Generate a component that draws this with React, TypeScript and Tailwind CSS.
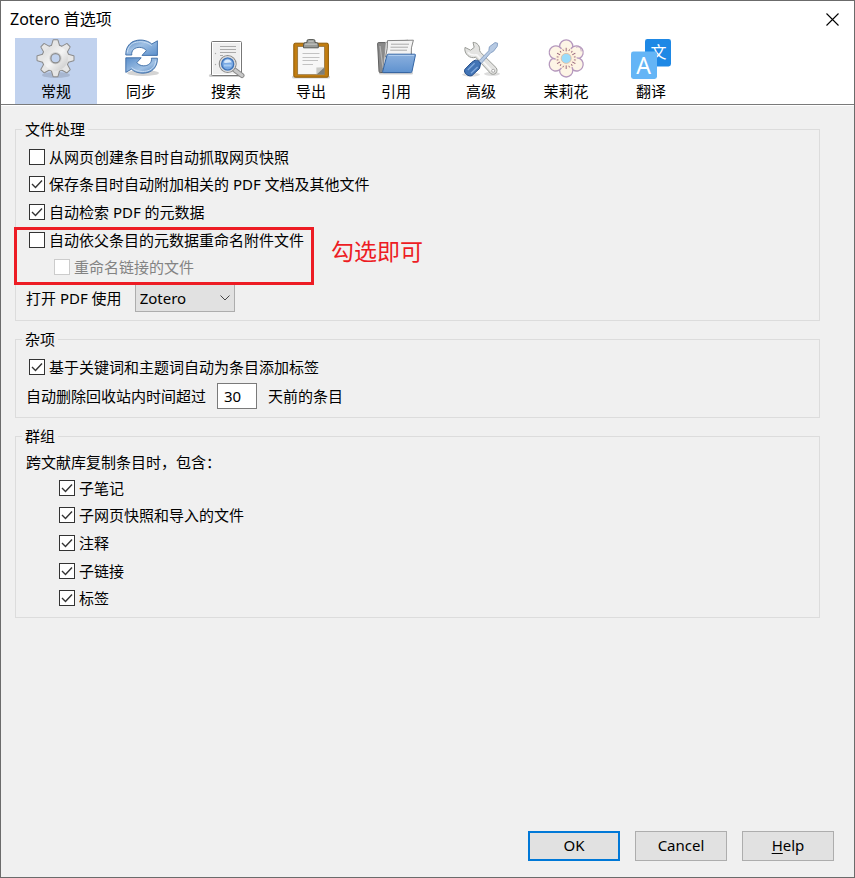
import { ReactNode, useState } from "react";
import { clsx } from "clsx";

function GearIcon() {
  const angles = [0, 45, 90, 135, 180, 225, 270, 315];
  return (
    <svg viewBox="0 0 40 40" className="size-10">
      <defs>
        <linearGradient id="gear" x1="0" y1="0" x2="1" y2="1">
          <stop offset="0" stopColor="#d8d8d8" />
          <stop offset="0.5" stopColor="#f4f4f4" />
          <stop offset="1" stopColor="#c4c4c4" />
        </linearGradient>
      </defs>
      <ellipse cx="20" cy="36" rx="14" ry="3" fill="#8f9bb3" opacity="0.5" />
      <g transform="translate(19.5 19.2)">
        <g fill="#8b8b8b" stroke="#8b8b8b" strokeWidth="2" strokeLinejoin="round">
          <circle r="13" />
          {angles.map((a) => (
            <path key={a} d="M-2 -18H2L4 -11H-4Z" transform={`rotate(${a})`} />
          ))}
        </g>
        <g fill="#e6e6e6">
          <circle r="13" />
          {angles.map((a) => (
            <path key={a} d="M-2 -18H2L4 -11H-4Z" transform={`rotate(${a})`} />
          ))}
        </g>
        <circle r="12.5" fill="url(#gear)" />
        <circle r="6.2" fill="#d2d2d2" />
        <circle r="4.6" fill="#c1d2ee" stroke="#8b8b8b" strokeWidth="1.2" />
      </g>
    </svg>
  );
}

function SyncIcon() {
  const arrow =
    "M4.8 16C4.6 9 8 4.6 12 2.6C18 -0.2 26 0.8 30.8 5L36.4 1.8V16.4H21L25.4 11.6C22 7.4 15.6 7.6 12.6 10.4C11 12 10.4 14 10.8 16Z";
  const shine =
    "M6.4 13.5C6.6 9 9.4 5.4 13 3.9C19 1.6 26 2.8 30.6 6.6";
  return (
    <svg viewBox="0 0 40 40" className="size-10">
      <defs>
        <linearGradient id="sync" x1="0" y1="0" x2="1" y2="1">
          <stop offset="0" stopColor="#4f82bd" />
          <stop offset="0.4" stopColor="#9fc0e4" />
          <stop offset="1" stopColor="#5b8fcb" />
        </linearGradient>
      </defs>
      <ellipse cx="22" cy="34" rx="16" ry="3" fill="#d4d4d4" />
      <g fill="url(#sync)" stroke="#3b6ba5" strokeWidth="0.9" strokeLinejoin="round">
        <path d={arrow} />
        <path d={arrow} transform="rotate(180 20.6 17.6)" />
      </g>
      <g fill="none" stroke="#c9def5" strokeWidth="1">
        <path d={shine} />
        <path d={shine} transform="rotate(180 20.6 17.6)" />
      </g>
    </svg>
  );
}

function SearchIcon() {
  return (
    <svg viewBox="0 0 40 40" className="size-10">
      <rect x="3" y="35" width="34" height="3" rx="1.5" fill="#cfcfcf" />
      <rect x="5.5" y="2.5" width="30" height="34" rx="1" fill="#efefef" stroke="#777" />
      <rect x="6.5" y="3.5" width="28" height="32" fill="none" stroke="#fff" />
      <path d="M14 7.5H30M14 10.5H30M14 13.5H30M14 16.5H17" stroke="#aaa" />
      <circle cx="9.5" cy="14.5" r="0.7" fill="#aaa" />
      <circle cx="9.5" cy="25.5" r="0.7" fill="#aaa" />
      <path d="M28 30.5L36 36.6" stroke="#888" strokeWidth="5" strokeLinecap="round" />
      <path d="M28 30.5L36 36.6" stroke="#c8c8c8" strokeWidth="3.2" strokeLinecap="round" />
      <circle cx="21.7" cy="25" r="8.4" fill="#fff" stroke="#8c8c8c" strokeWidth="1.2" />
      <circle cx="21.7" cy="25" r="7.2" fill="#79a9e4" stroke="#d8d8d8" strokeWidth="1.2" />
      <circle cx="21.7" cy="25" r="6" fill="none" stroke="#3f72b5" strokeWidth="1.2" />
      <path d="M17.8 23.6C18.6 19.6 24.8 19.6 25.6 23.6C23 22.8 20.4 24.6 17.8 23.6Z" fill="#d8e9fb" />
      <path d="M18 26.5H25.4" stroke="#a6cbf3" strokeWidth="2" />
    </svg>
  );
}

function ExportIcon() {
  return (
    <svg viewBox="0 0 40 40" className="size-10">
      <rect x="1" y="36.5" width="38" height="3" rx="1.5" fill="#d2d2d2" />
      <rect x="2.8" y="4.2" width="34.6" height="34" rx="1.4" fill="#c17d11" stroke="#8f5902" />
      <rect x="6.7" y="7.5" width="26.8" height="28.2" fill="#f7f7f7" stroke="#8a6a35" strokeWidth="0.7" />
      <path d="M11.5 14.5H28.5M11.5 18.5H28.5M11.5 21.5H27M11.5 25.5H22" stroke="#c2c2c2" />
      <path d="M25.4 35.6V28.6L33.4 28.3Z" fill="#c9cac7" />
      <path d="M33.4 28.3V35.6H25.4Z" fill="#7c7f7a" />
      <path
        d="M12.5 8.8V5.4Q12.5 3.6 14.5 3.6H16V2Q16 0.6 17.5 0.6H22.5Q24 0.6 24 2V3.6H25.3Q27.3 3.6 27.3 5.4V8.8Z"
        fill="#9a9c98"
        stroke="#555753"
      />
      <path d="M17.5 2.2H22.5M14 5.2H26" stroke="#c8cac6" />
    </svg>
  );
}

function FolderIcon() {
  return (
    <svg viewBox="0 0 40 40" className="size-10">
      <defs>
        <linearGradient id="folder" x1="0" y1="0" x2="0" y2="1">
          <stop offset="0" stopColor="#8bb0de" />
          <stop offset="1" stopColor="#5f92cf" />
        </linearGradient>
      </defs>
      <rect x="3" y="32.5" width="34" height="3" rx="1.5" fill="#cfcfcf" />
      <path
        d="M1.6 4.6Q1.6 3.6 2.6 3.6H9L10 5.4H32V33.5H4.2Q3 33.5 3 32.2Z"
        fill="#8a8a8a"
        stroke="#5f5f5f"
      />
      <path d="M4 7L7 29" stroke="#b5b5b5" strokeWidth="1.2" />
      <path d="M9.4 3.4L32 1.2L36 18L7 30Z" fill="#dedede" stroke="#888" strokeWidth="0.8" />
      <path d="M11.5 1.6L37.4 1.2Q34.6 8 35.2 18H9.5Q12 9 11.5 1.6Z" fill="#f3f3f3" stroke="#777" strokeWidth="0.9" />
      <path d="M15 5.2H33M14.5 8.2H32M14.2 11.2H31" stroke="#aaa" />
      <path
        d="M12.2 15.2H38.6Q39.6 15.2 39.4 16.2L36 32.4Q35.7 33.6 34.6 33.6H7.6Q6.4 33.6 6.7 32.4L11 16.2Q11.3 15.2 12.2 15.2Z"
        fill="url(#folder)"
        stroke="#3465a4"
      />
      <path d="M12.4 16.4H38" stroke="#b5cff0" />
    </svg>
  );
}

function ToolsIcon() {
  return (
    <svg viewBox="0 0 40 40" className="size-10">
      <ellipse cx="10" cy="35.6" rx="9" ry="2" fill="#dcdcdc" />
      <ellipse cx="31" cy="34.8" rx="8" ry="2" fill="#dcdcdc" />
      <path
        d="M4 8.4L9.6 11.2L13.2 8.4L12 3.4C16 3.2 19.2 7 18.6 11.4L19.4 13.2L35 28.6C38 32.2 33.8 37.2 29.8 34.6L14.6 18.2C9.4 20.4 2.6 15 4 8.4Z"
        fill="#e3e3e1"
        stroke="#9a9c97"
        strokeLinejoin="round"
      />
      <path d="M7 13.4C9.6 17 13.6 15.6 16 16L30.4 31.4" stroke="#f8f8f8" strokeWidth="1.6" fill="none" />
      <circle cx="32.2" cy="31.8" r="1.5" fill="#fff" stroke="#999" strokeWidth="0.8" />
      <path
        d="M17.4 22.4L27.8 11.8L28.4 7.8L34 3.6L36.6 4.2L36.2 7.4L32.4 12.4L29.6 13.8L20 24.8Z"
        fill="#b7cae3"
        stroke="#809bbf"
        strokeWidth="0.9"
        strokeLinejoin="round"
      />
      <path
        d="M13 21.8C15.6 19.6 21 23.2 19.2 26.6L18.4 29.6L11 36.6C7.6 38 2.2 34.4 3.8 30.4L10.6 23.4Z"
        fill="#4274b5"
        stroke="#204a87"
        strokeLinejoin="round"
      />
      <path d="M6.8 31L13.6 24.2M10 34.2L16.6 28" stroke="#7fa8dc" strokeWidth="1.3" />
    </svg>
  );
}

function JasmineIcon() {
  const petals = [0, 60, 120, 180, 240, 300];
  return (
    <svg viewBox="0 0 40 40" className="size-10">
      <g transform="translate(20.2 19.4)">
        {petals.map((a) => (
          <circle
            key={a}
            cy="-12"
            r="6.6"
            fill="#fdf5e6"
            stroke="#b598bd"
            strokeWidth="1.3"
            transform={`rotate(${a})`}
          />
        ))}
        <circle r="10.6" fill="#fdf1dc" />
        {petals.map((a) => (
          <path
            key={a}
            d="M0 -7V-10.6M-2.6 -7.4L-3.4 -9M2.6 -7.4L3.4 -9"
            stroke="#94607c"
            strokeWidth="0.9"
            transform={`rotate(${a})`}
          />
        ))}
        <circle r="5" fill="#9bdcfb" stroke="#e2b79a" strokeWidth="0.8" />
        <path d="M10 -11C12 -12.5 15 -11 15 -7" fill="none" stroke="#b598bd" strokeWidth="0.8" />
      </g>
    </svg>
  );
}

function TranslateIcon() {
  return (
    <svg viewBox="0 0 40 40" className="size-10 overflow-visible">
      <rect x="14" y="0" width="26" height="27.5" rx="2.4" fill="#1e88e5" />
      <text
        x="27.5"
        y="19"
        fontSize="16"
        fill="#fff"
        textAnchor="middle"
        className="font-['Noto_Sans_CJK_SC',sans-serif]"
      >
        文
      </text>
      <rect x="0" y="12.5" width="26" height="27.5" rx="2.4" fill="#64b5f6" />
      <text
        x="12.5"
        y="34.5"
        fontSize="23"
        fill="#fff"
        textAnchor="middle"
        className="font-['Noto_Sans',sans-serif]"
      >
        A
      </text>
    </svg>
  );
}

const tabs: { label: string; icon: ReactNode }[] = [
  { label: "常规", icon: <GearIcon /> },
  { label: "同步", icon: <SyncIcon /> },
  { label: "搜索", icon: <SearchIcon /> },
  { label: "导出", icon: <ExportIcon /> },
  { label: "引用", icon: <FolderIcon /> },
  { label: "高级", icon: <ToolsIcon /> },
  { label: "茉莉花", icon: <JasmineIcon /> },
  { label: "翻译", icon: <TranslateIcon /> },
];

interface CheckProps {
  label: string;
  checked?: boolean;
  disabled?: boolean;
  className?: string;
}

function Check({ label, checked, disabled, className }: CheckProps) {
  return (
    <label
      className={clsx(
        "flex items-center gap-1",
        disabled && "text-[#838383]",
        className,
      )}
    >
      <span className="grid size-4 shrink-0">
        <input
          type="checkbox"
          defaultChecked={checked}
          disabled={disabled}
          className="peer col-start-1 row-start-1 size-4 appearance-none border border-[#333] bg-white disabled:border-[#ccc]"
        />
        <svg
          viewBox="0 0 16 16"
          className="pointer-events-none invisible col-start-1 row-start-1 size-4 peer-checked:visible"
        >
          <path d="M3 8L6.5 11.5L13 4.5" fill="none" stroke="#333" strokeWidth="1.4" />
        </svg>
      </span>
      {label}
    </label>
  );
}

function Group({ title, children }: { title: string; children: ReactNode }) {
  return (
    <fieldset className="min-w-0 border border-[#dcdcdc]">
      <legend className="ml-1.5 px-[3px] leading-5">{title}</legend>
      {children}
    </fieldset>
  );
}

export default function App() {
  const [active, setActive] = useState("常规");

  return (
    <div className="flex min-h-screen flex-col border border-[#6b6b6b] bg-[#f0f0f0] font-['Noto_Sans','Noto_Sans_CJK_SC',sans-serif] text-[15px] leading-5 text-black">
      <header className="border-b border-[#7a7a7a] bg-white">
        <div className="flex h-[37px] items-center justify-between pr-[15px] pl-[9px]">
          <h1 className="pb-0.5 text-base leading-5">Zotero 首选项</h1>
          <button aria-label="Close">
            <svg viewBox="0 0 13 13" className="size-[13px]">
              <path d="M0.5 0.5L12.5 12.5M12.5 0.5L0.5 12.5" stroke="#000" strokeWidth="1.1" />
            </svg>
          </button>
        </div>
        <nav className="flex gap-[3px] pl-[14px]">
          {tabs.map((tab) => (
            <button
              key={tab.label}
              onClick={() => setActive(tab.label)}
              className={clsx(
                "flex h-[66px] w-[82px] flex-col items-center gap-0.5 pt-px",
                active === tab.label && "bg-[#c1d2ee]",
              )}
            >
              {tab.icon}
              {tab.label}
            </button>
          ))}
        </nav>
      </header>

      <main className="flex flex-col gap-2 border-t border-white pt-[13px] pr-[34px] pl-[14px]">
        <Group title="文件处理">
          <div className="relative grid h-[142px] grid-rows-5 pt-1 pl-[13px]">
            <Check label="从网页创建条目时自动抓取网页快照" />
            <Check label="保存条目时自动附加相关的 PDF 文档及其他文件" checked />
            <Check label="自动检索 PDF 的元数据" checked />
            <Check label="自动依父条目的元数据重命名附件文件" />
            <Check label="重命名链接的文件" disabled className="pl-[25px]" />
            <div className="pointer-events-none absolute top-[88px] -left-0.5 z-10 h-[58px] w-[300px] border-3 border-[#ed1c24]" />
            <p className="absolute top-[95px] left-[315px] font-['FangSong','Noto_Sans_CJK_SC',serif] text-[23px] leading-8 text-[#ed1c24]">
              勾选即可
            </p>
          </div>
          <div className="mb-[5px] flex h-[34px] items-center gap-[13px] pl-2.5">
            <label htmlFor="open-pdf">打开 PDF 使用</label>
            <div className="grid items-center">
              <select
                id="open-pdf"
                className="col-start-1 row-start-1 h-7 w-[100px] appearance-none border border-[#adadad] bg-[#e1e1e1] pl-1"
              >
                <option>Zotero</option>
              </select>
              <svg
                viewBox="0 0 10 6"
                className="pointer-events-none col-start-1 row-start-1 mr-[5px] h-1.5 w-2.5 justify-self-end"
              >
                <path d="M0.5 0.5L5 5L9.5 0.5" fill="none" stroke="#444" />
              </svg>
            </div>
          </div>
        </Group>

        <Group title="杂项">
          <div className="pt-1 pb-1.5">
            <Check
              label="基于关键词和主题词自动为条目添加标签"
              checked
              className="h-7 pl-[13px]"
            />
            <div className="flex h-[30px] items-center gap-[11px] pl-2.5">
              <label htmlFor="trash-days">自动删除回收站内时间超过</label>
              <input
                id="trash-days"
                defaultValue="30"
                className="h-[26px] w-10 border border-[#7a7a7a] bg-white pl-1.5"
              />
              <span>天前的条目</span>
            </div>
          </div>
        </Group>

        <Group title="群组">
          <div className="pt-1 pb-[5px] pl-2.5">
            <p className="leading-6">跨文献库复制条目时，包含：</p>
            <div className="grid h-[138px] grid-rows-5 pl-[33px]">
              <Check label="子笔记" checked />
              <Check label="子网页快照和导入的文件" checked />
              <Check label="注释" checked />
              <Check label="子链接" checked />
              <Check label="标签" checked />
            </div>
          </div>
        </Group>
      </main>

      <footer className="mt-auto flex justify-end gap-[15px] pt-4 pr-5 pb-4">
        <button className="h-[30px] w-[92px] border-2 border-[#0078d7] bg-[#e1e1e1] pb-0.5">
          OK
        </button>
        <button className="h-[30px] w-[92px] border border-[#adadad] bg-[#e1e1e1] pb-0.5">
          Cancel
        </button>
        <button className="h-[30px] w-[92px] border border-[#adadad] bg-[#e1e1e1] pb-0.5">
          <span className="underline underline-offset-2">H</span>elp
        </button>
      </footer>
    </div>
  );
}
